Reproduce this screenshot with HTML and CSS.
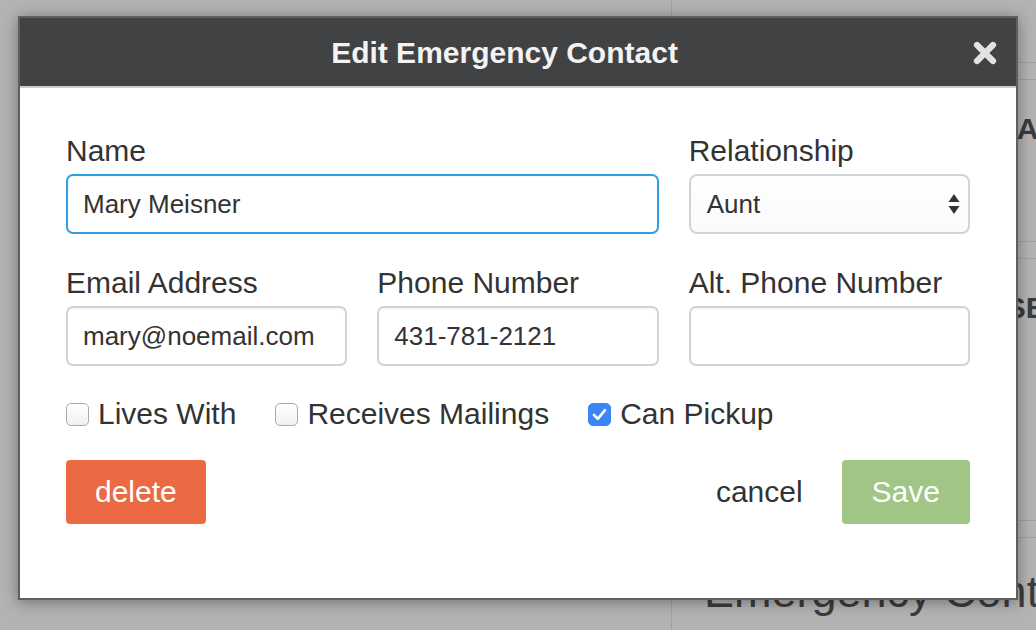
FILE: index.html
```html
<!DOCTYPE html>
<html>
<head>
<meta charset="utf-8">
<title>Edit Emergency Contact</title>
<link rel="stylesheet" href="styles.css">
</head>
<body>
<div class="backdrop">
  <div class="backdrop-left"></div>
  <div class="backdrop-right">
    <div class="bg-top"></div>
    <div class="bg-head"></div>
    <div class="bg-row bg-row-a"><span class="bg-cell bg-cell-a">NA</span></div>
    <div class="bg-head"></div>
    <div class="bg-row bg-row-b"><span class="bg-cell bg-cell-b">RSE</span></div>
    <div class="bg-head"></div>
    <h2 class="bg-heading">Emergency Contacts</h2>
  </div>
</div>

<div class="modal">
  <div class="modal-header">
    <h1 class="modal-title">Edit Emergency Contact</h1>
    <span class="modal-close" aria-label="close">
      <svg width="24" height="24" viewBox="0 0 24 24"><path d="M4 4 L20 20 M20 4 L4 20" stroke="#e2e2e2" stroke-width="6.2" stroke-linecap="round" fill="none"/></svg>
    </span>
  </div>
  <div class="modal-body">
    <div class="form-grid">
      <div class="field field-wide">
        <label class="field-label">Name</label>
        <input class="field-input focused" type="text" value="Mary Meisner">
      </div>
      <div class="field">
        <label class="field-label">Relationship</label>
        <div class="field-select">
          <span>Aunt</span>
          <svg class="select-arrows" width="12" height="22" viewBox="0 0 12 22"><path d="M6 1 L11.5 9 L0.5 9 Z M0.5 13 L11.5 13 L6 21 Z" fill="#333"/></svg>
        </div>
      </div>
      <div class="field">
        <label class="field-label">Email Address</label>
        <input class="field-input" type="text" value="mary@noemail.com">
      </div>
      <div class="field">
        <label class="field-label">Phone Number</label>
        <input class="field-input" type="text" value="431-781-2121">
      </div>
      <div class="field">
        <label class="field-label">Alt. Phone Number</label>
        <input class="field-input" type="text" value="">
      </div>
    </div>

    <div class="checks">
      <label class="check"><span class="check-box"></span>Lives With</label>
      <label class="check"><span class="check-box"></span>Receives Mailings</label>
      <label class="check"><span class="check-box checked"><svg width="15" height="13" viewBox="0 0 15 13"><path d="M2 7 L5.8 10.8 L13 2.2" stroke="#fff" stroke-width="2.6" fill="none" stroke-linecap="round" stroke-linejoin="round"/></svg></span>Can Pickup</label>
    </div>

    <div class="actions">
      <button class="btn btn-delete">delete</button>
      <div class="actions-spacer"></div>
      <button class="btn btn-cancel">cancel</button>
      <button class="btn btn-save">Save</button>
    </div>
  </div>
</div>
</body>
</html>
```
FILE: styles.css
```css
* { box-sizing: border-box; }

html, body {
  margin: 0;
  padding: 0;
}

body {
  width: 1036px;
  height: 630px;
  overflow: hidden;
  position: relative;
  background: #b3b3b3;
  font-family: "Liberation Sans", Arial, Helvetica, sans-serif;
  color: #333;
}

/* ---------- dimmed page behind the dialog ---------- */
.backdrop {
  display: flex;
  height: 630px;
}

.backdrop-left {
  width: 671px;
  flex: none;
}

.backdrop-right {
  flex: 1;
  border-left: 1px solid #a2a2a2;
  overflow: hidden;
}

.bg-top {
  height: 63px;
  border-bottom: 1px solid #a0a0a0;
}

.bg-head {
  height: 17px;
  border-bottom: 1px solid #a0a0a0;
}

.bg-row {
  height: 162px;
  border-bottom: 1px solid #a0a0a0;
  padding-top: 32px;
}

.bg-row-b {
  height: 262px;
}

.bg-cell {
  display: block;
  font-weight: 700;
  font-size: 30px;
  line-height: 34px;
  color: #3b3b3b;
  white-space: nowrap;
}

.bg-cell-a { padding-left: 323px; }
.bg-cell-b { padding-left: 312px; }

.bg-heading {
  margin: 28px 0 0 32px;
  font-weight: 400;
  font-size: 45px;
  line-height: 52px;
  color: #3c3c3c;
  white-space: nowrap;
}

/* ---------- dialog ---------- */
.modal {
  position: absolute;
  left: 18px;
  top: 16px;
  width: 1000px;
  border: 2px solid #5f5f5f;
  background: #fff;
  box-shadow: 0 2px 14px rgba(0, 0, 0, 0.38);
}

.modal-header {
  position: relative;
  height: 70px;
  background: #414244;
  border-bottom: 2px solid #cdcdcd;
  display: flex;
  align-items: center;
  justify-content: center;
  padding: 2px 27px 0 0;
}

.modal-title {
  margin: 0;
  flex: 1;
  text-align: center;
  font-size: 30px;
  font-weight: 700;
  line-height: 34px;
  color: #f3f3f3;
}

.modal-close {
  position: absolute;
  right: 19px;
  top: 23px;
  width: 24px;
  height: 24px;
  display: flex;
}

.modal-body {
  padding: 46px 46px 74px;
}

.form-grid {
  display: grid;
  grid-template-columns: repeat(3, 1fr);
  column-gap: 30px;
  row-gap: 32px;
}

.field-wide {
  grid-column: span 2;
}

.field-label {
  display: block;
  font-size: 30px;
  line-height: 34px;
  color: #333;
  margin-bottom: 6px;
}

.field-input {
  display: block;
  width: 100%;
  height: 60px;
  border: 2px solid #d3d3d3;
  border-radius: 7px;
  padding: 0 15px;
  font-family: inherit;
  font-size: 26px;
  color: #333;
  background: #fff;
  outline: none;
  box-shadow: inset 0 1px 2px rgba(0, 0, 0, 0.04);
}

.field-input.focused {
  border-color: #2d9fe5;
}

.field-select {
  display: flex;
  align-items: center;
  justify-content: space-between;
  height: 60px;
  border: 2px solid #d3d3d3;
  border-radius: 8px;
  padding: 0 8px 0 16px;
  font-size: 26px;
  color: #333;
  background: linear-gradient(#ffffff, #fafafa);
}

.select-arrows {
  display: block;
}

/* ---------- checkboxes ---------- */
.checks {
  display: flex;
  align-items: center;
  margin-top: 31px;
}

.check {
  display: flex;
  align-items: center;
  gap: 9px;
  margin-right: 39px;
  font-size: 30px;
  line-height: 34px;
  color: #333;
}

.check-box {
  width: 23px;
  height: 23px;
  flex: none;
  border: 1px solid #ababab;
  border-radius: 5px;
  background: linear-gradient(#ffffff, #f0f0f0);
  display: flex;
  align-items: center;
  justify-content: center;
}

.check-box.checked {
  border-color: #3a84f4;
  background: #3b86f6;
}

/* ---------- buttons ---------- */
.actions {
  display: flex;
  align-items: center;
  margin-top: 29px;
}

.actions-spacer {
  flex: 1;
}

.btn {
  height: 64px;
  border: 0;
  border-radius: 4px;
  padding: 0 29px;
  font-family: inherit;
  font-size: 30px;
  color: #fff;
  background: transparent;
}

.btn-delete {
  background: #ec6a43;
}

.btn-cancel {
  color: #333;
  padding: 0 30px;
  margin-right: 9px;
}

.btn-save {
  background: #a0c585;
  padding: 0 30px;
}
```
